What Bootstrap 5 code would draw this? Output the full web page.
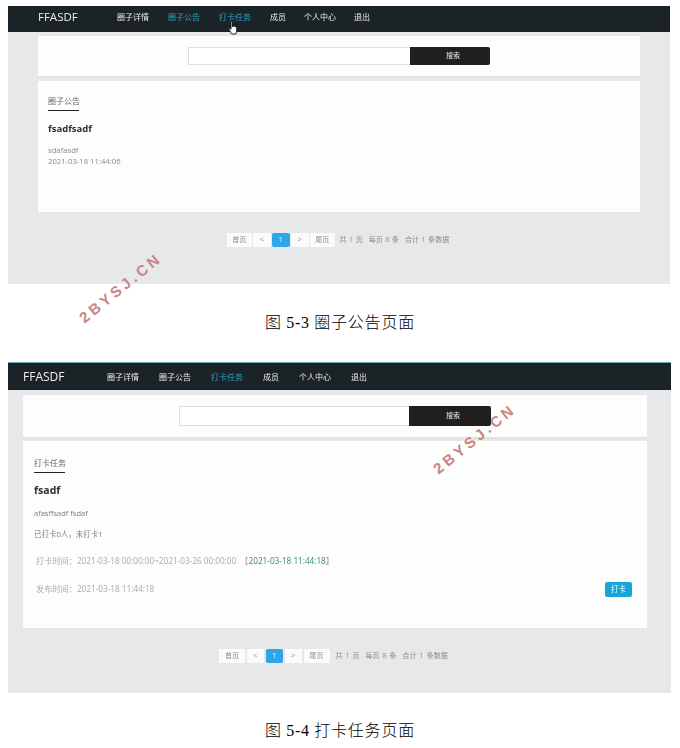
<!DOCTYPE html>
<html lang="zh-CN">
<head>
  <meta charset="UTF-8" />
  <meta name="viewport" content="width=device-width, initial-scale=1.0" />
  <title>圈子公告 / 打卡任务</title>
  <link href="https://cdn.jsdelivr.net/npm/bootstrap@5.3.0/dist/css/bootstrap.min.css" rel="stylesheet">
  <style>
    body { background: #fff; font-family: "Open Sans", "Noto Sans CJK SC", sans-serif; overflow: hidden; }
    .shot { position: relative; background: #e6e8ea; filter: blur(.3px); }
    .shot-a { margin: 6px 10px 0 8px; height: 278px; }
    .shot-b { margin: 0 9px 0 8px; height: 331px; border-top: 1px solid #5fa9b8; }
    .top-bar { background: #1b2327; padding: 0; }
    .shot-a .top-bar { height: 26px; padding: 0 0 4px 30px; }
    .shot-b .top-bar { height: 27px; padding: 0 0 0 15px; }
    .top-bar .navbar-brand { color: #eef0f0; font-size: 11.5px; line-height: 16px; padding: 0; margin: 0; }
    .shot-a .navbar-brand { width: 79px; }
    .shot-b .navbar-brand { width: 84px; font-size: 12px; }
    .navbar-expand.top-bar .navbar-nav .nav-link { color: #e8eaea; font-size: 8px; line-height: 12px; padding: 0; }
    .navbar-expand.top-bar .navbar-nav .nav-link.on { color: #2fa3c4; }
    .shot-a .nav-link { margin-right: 19px; }
    .shot-a .nav-link.tight { margin-right: 18px; }
    .shot-b .nav-link { margin-right: 20px; }
    .sheet { background: #fdfdfb; }
    .shot-a .sheet { margin: 0 30px; }
    .shot-b .sheet { margin: 0 24px 0 15px; }
    .search-sheet { box-shadow: 0 2px 2px rgba(0, 0, 0, .03); }
    .shot-a .search-sheet { margin-top: 4px; height: 40px; padding-top: 11px; }
    .shot-b .search-sheet { margin-top: 5px; height: 42px; padding-top: 11px; }
    .shot-a .body-sheet { margin-top: 5px; height: 131px; padding: 5px 10px 0; }
    .shot-b .body-sheet { margin-top: 4px; height: 187px; padding: 7px 11px 0; }
    .search-box { flex-wrap: nowrap; }
    .shot-a .search-box { width: 302px; height: 18px; }
    .shot-b .search-box { width: 312px; height: 20px; }
    .search-box .form-control { border: 1px solid #dedfdc; border-radius: 0; background: #fff; min-height: 0; padding: 0; }
    .search-box .btn { width: 80px; flex: none; background: #201f1d; color: #eee; border: 0; border-radius: 0 2px 2px 0; font-size: 7px; padding: 0 0 0 6px; }
    .shot-b .search-box .btn { width: 82px; }
    .tab-title { display: inline-block; font-size: 8px; line-height: 12px; color: #666; padding-bottom: 3px; border-bottom: 1.5px solid #222; width: 31px; white-space: nowrap; }
    .item-title { color: #27313a; font-size: 9.5px; font-weight: 700; line-height: 14px; }
    .shot-a .item-title { margin: 11px 0 9px; }
    .shot-b .item-title { margin: 10px 0 11px; font-size: 10.5px; }
    .line { font-size: 7.7px; line-height: 11px; color: #8b8b8b; margin: 0; }
    .shot-b .line { color: #7d7d7d; font-size: 7.5px; }
    .gap-one { margin-top: 10px; }
    .shot-b .info { color: #aaa; padding-left: 2px; font-size: 8.2px; }
    .info-one { margin-top: 15px !important; }
    .info-two { margin-top: 0; padding-top: 17px; }
    .green { color: #2f8a78; }
    .punch-btn { background: #17a5dc; color: #fff; border: 0; border-radius: 2px; font-size: 7.5px; line-height: 15px; width: 27px; padding: 0; margin: 0 4px -3px 0; }
    .pager-row { color: #8b8d90; font-size: 7px; }
    .shot-a .pager-row { margin-top: 21px; padding-left: 219px; }
    .shot-b .pager-row { margin-top: 21px; padding-left: 211px; }
    .pager-row .pagination { margin: 0; gap: 1.5px; }
    .pager-row .page-item .page-link { background: #fbfbfb; color: #8b8d90; border: 0; border-radius: 1px; margin: 0; font-size: 7px; line-height: 14px; height: 14px; width: 17.5px; padding: 0; text-align: center; }
    .pager-row .page-item .page-link.edge { width: 24.5px; }
    .shot-b .page-item .page-link.edge { width: 26px; }
    .pager-row .page-item.active .page-link { background: #2fa6ea; color: #fff; border-radius: 2px; }
    .pager-note { margin-left: 5px; white-space: nowrap; word-spacing: .8px; }
    .shot-b .pager-note { margin-left: 6px; word-spacing: 1.2px; }
    .pager-note span { margin-right: 6px; }
    .caption { font-family: "Noto Sans CJK SC", serif; font-size: 16px; font-weight: 300; letter-spacing: .8px; line-height: 20px; color: #000; text-align: center; margin: 0; }
    .caption-num { font-family: "Liberation Serif", serif; font-weight: 400; }
    .caption-a { padding: 27px 0 0; height: 78px; }
    .caption-b { padding: 26px 0 0; }
    .stamp { position: absolute; color: #c98484; font-family: "Liberation Sans", sans-serif; font-size: 15px; font-weight: 700; letter-spacing: 3.5px; line-height: 18px; white-space: nowrap; transform: rotate(-39deg); transform-origin: center; z-index: 5; }
    .stamp-a { left: 70px; top: 279px; }
    .stamp-b { left: 424px; top: 430px; }
    .hand { position: absolute; left: 228px; top: 21px; z-index: 4; }
  </style>
</head>
<body>
  <div class="shot shot-a">
    <nav class="navbar navbar-expand top-bar">
      <a class="navbar-brand" href="#">FFASDF</a>
      <div class="navbar-nav flex-row">
        <a class="nav-link" href="#">圈子详情</a>
        <a class="nav-link on" href="#">圈子公告</a>
        <a class="nav-link on" href="#">打卡任务</a>
        <a class="nav-link tight" href="#">成员</a>
        <a class="nav-link tight" href="#">个人中心</a>
        <a class="nav-link" href="#">退出</a>
      </div>
    </nav>
    <div class="sheet search-sheet d-flex justify-content-center">
      <div class="input-group search-box">
        <input type="text" class="form-control" />
        <button class="btn" type="button">搜索</button>
      </div>
    </div>
    <div class="sheet body-sheet">
      <div class="tab-title">圈子公告</div>
      <div class="item-title">fsadfsadf</div>
      <p class="line">sdafasdf</p>
      <p class="line">2021-03-18 11:44:06</p>
    </div>
    <div class="pager-row d-flex align-items-center">
      <ul class="pagination">
        <li class="page-item"><a class="page-link edge" href="#">首页</a></li>
        <li class="page-item"><a class="page-link" href="#">&lt;</a></li>
        <li class="page-item active"><a class="page-link" href="#">1</a></li>
        <li class="page-item"><a class="page-link" href="#">&gt;</a></li>
        <li class="page-item"><a class="page-link edge" href="#">尾页</a></li>
      </ul>
      <div class="pager-note"><span>共 1 页</span><span>每页 8 条</span><span>合计 1 条数据</span></div>
    </div>
  </div>
  <p class="caption caption-a">图 <span class="caption-num">5-3</span> 圈子公告页面</p>

  <div class="shot shot-b">
    <nav class="navbar navbar-expand top-bar">
      <a class="navbar-brand" href="#">FFASDF</a>
      <div class="navbar-nav flex-row">
        <a class="nav-link" href="#">圈子详情</a>
        <a class="nav-link" href="#">圈子公告</a>
        <a class="nav-link on" href="#">打卡任务</a>
        <a class="nav-link" href="#">成员</a>
        <a class="nav-link" href="#">个人中心</a>
        <a class="nav-link" href="#">退出</a>
      </div>
    </nav>
    <div class="sheet search-sheet d-flex justify-content-center">
      <div class="input-group search-box">
        <input type="text" class="form-control" />
        <button class="btn" type="button">搜索</button>
      </div>
    </div>
    <div class="sheet body-sheet">
      <div class="tab-title">打卡任务</div>
      <div class="item-title">fsadf</div>
      <p class="line">afasffsadf fsdaf</p>
      <p class="line gap-one">已打卡0人，未打卡1</p>
      <p class="line info info-one">打卡时间：2021-03-18 00:00:00~2021-03-26 00:00:00 &nbsp;【<span class="green">2021-03-18 11:44:18</span>】</p>
      <div class="d-flex justify-content-between align-items-end">
        <p class="line info info-two">发布时间：2021-03-18 11:44:18</p>
        <button class="btn punch-btn" type="button">打卡</button>
      </div>
    </div>
    <div class="pager-row d-flex align-items-center">
      <ul class="pagination">
        <li class="page-item"><a class="page-link edge" href="#">首页</a></li>
        <li class="page-item"><a class="page-link" href="#">&lt;</a></li>
        <li class="page-item active"><a class="page-link" href="#">1</a></li>
        <li class="page-item"><a class="page-link" href="#">&gt;</a></li>
        <li class="page-item"><a class="page-link edge" href="#">尾页</a></li>
      </ul>
      <div class="pager-note"><span>共 1 页</span><span>每页 8 条</span><span>合计 1 条数据</span></div>
    </div>
  </div>
  <p class="caption caption-b">图 <span class="caption-num">5-4</span> 打卡任务页面</p>

  <svg class="hand" width="11" height="14" viewBox="0 0 11 14">
    <path d="M3 1.2c0-.9 1.5-.9 1.5 0V6l.3-1c.7-.3 1.2 0 1.3.5.6-.4 1.2-.2 1.3.4.6-.3 1.3 0 1.3.7v3.2c0 1.4-.6 2.3-.9 3.2H3.6L1 8.4c-.5-.8.3-1.5 1-1L3 8.3z" fill="#fff" stroke="#111" stroke-width=".9"/>
  </svg>
  <div class="stamp stamp-a">2BYSJ.CN</div>
  <div class="stamp stamp-b">2BYSJ.CN</div>

  <script src="https://cdn.jsdelivr.net/npm/bootstrap@5.3.0/dist/js/bootstrap.bundle.min.js"></script>
</body>
</html>
